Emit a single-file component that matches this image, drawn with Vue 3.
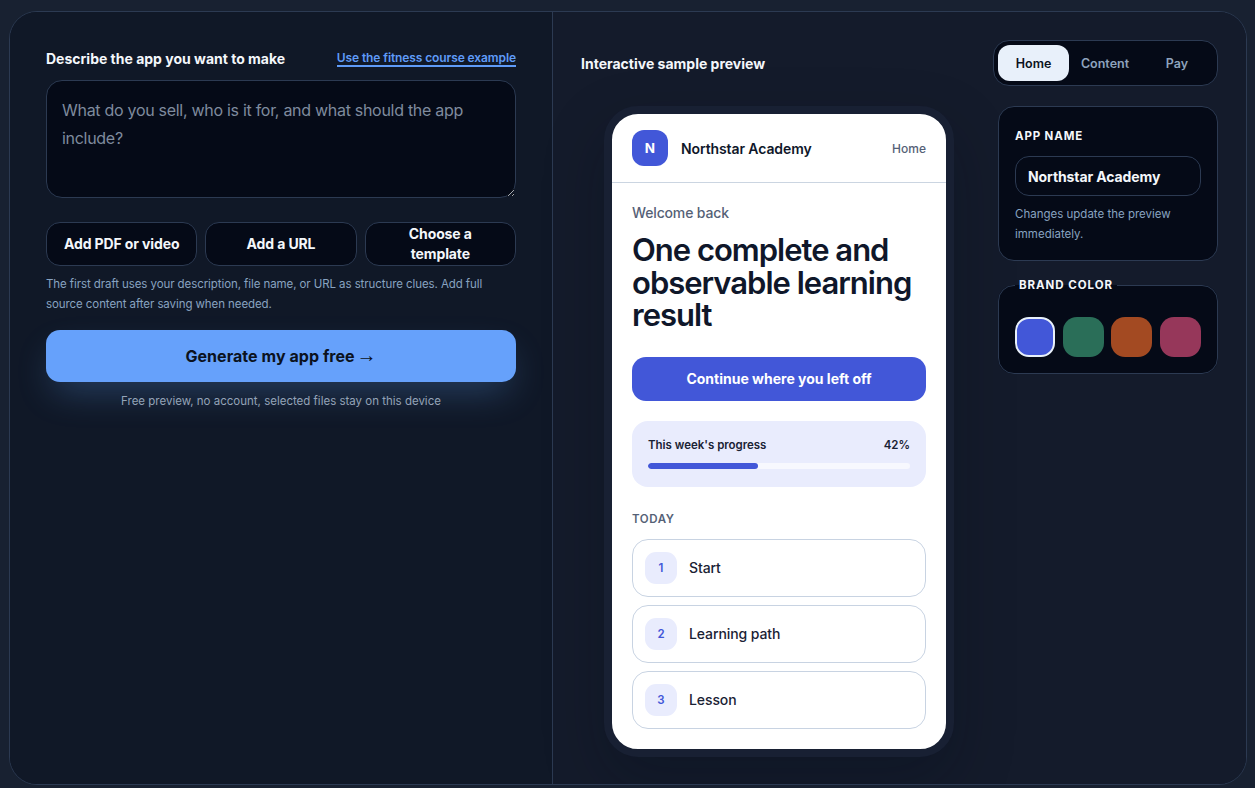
<template>
  <div class="page">
    <main class="shell">
      <section class="left">
        <div class="field-head">
          <label class="field-label" for="desc">Describe the app you want to make</label>
          <a class="example-link" href="#">Use the fitness course example</a>
        </div>
        <textarea
          id="desc"
          v-model="description"
          class="desc-box"
          placeholder="What do you sell, who is it for, and what should the app include?"
        ></textarea>

        <div class="source-row">
          <button v-for="item in sources" :key="item" class="source-btn">{{ item }}</button>
        </div>
        <p class="hint">
          The first draft uses your description, file name, or URL as structure clues. Add full
          source content after saving when needed.
        </p>

        <button class="generate">Generate my app free <span class="arrow">→</span></button>
        <p class="note">Free preview, no account, selected files stay on this device</p>
      </section>

      <section class="right">
        <div class="right-head">
          <h2 class="preview-title">Interactive sample preview</h2>
          <div class="tabs">
            <button
              v-for="tab in tabs"
              :key="tab"
              class="tab"
              :class="{ active: tab === activeTab }"
              @click="activeTab = tab"
            >
              {{ tab }}
            </button>
          </div>
        </div>

        <div class="right-body">
          <div class="phone">
            <div class="screen">
              <header class="app-bar">
                <div class="app-logo" :style="{ background: brand }">{{ appName.charAt(0) }}</div>
                <div class="app-title">{{ appName }}</div>
                <div class="app-nav">Home</div>
              </header>

              <div class="app-content">
                <div class="welcome">Welcome back</div>
                <h1 class="headline">One complete and observable learning result</h1>
                <button class="continue" :style="{ background: brand }">Continue where you left off</button>

                <div class="progress-card">
                  <div class="progress-top">
                    <span>This week's progress</span>
                    <span>{{ progress }}%</span>
                  </div>
                  <div class="progress-track">
                    <div class="progress-fill" :style="{ width: progress + '%', background: brand }"></div>
                  </div>
                </div>

                <div class="today">TODAY</div>
                <div class="lesson-list">
                  <div v-for="(lesson, i) in lessons" :key="lesson" class="lesson">
                    <span class="lesson-num" :style="{ color: brand }">{{ i + 1 }}</span>
                    <span class="lesson-name">{{ lesson }}</span>
                  </div>
                </div>
              </div>
            </div>
          </div>

          <aside class="side">
            <div class="side-card">
              <label class="side-label" for="app-name">APP NAME</label>
              <input id="app-name" v-model="appName" class="name-input" type="text" />
              <p class="side-hint">Changes update the preview immediately.</p>
            </div>

            <fieldset class="color-card">
              <legend class="color-legend">BRAND COLOR</legend>
              <div class="swatches">
                <button
                  v-for="color in colors"
                  :key="color"
                  class="swatch"
                  :class="{ selected: color === brand }"
                  :style="{ background: color }"
                  @click="brand = color"
                ></button>
              </div>
            </fieldset>
          </aside>
        </div>
      </section>
    </main>
  </div>
</template>

<script setup>
import { ref } from "vue";

const description = ref("");
const appName = ref("Northstar Academy");
const activeTab = ref("Home");
const brand = ref("#4257d8");
const progress = ref(42);

const sources = ["Add PDF or video", "Add a URL", "Choose a template"];
const tabs = ["Home", "Content", "Pay"];
const lessons = ["Start", "Learning path", "Lesson"];
const colors = ["#4257d8", "#2a6e58", "#a34a22", "#96375a"];
</script>

<style>
html,
body {
  margin: 0;
  background: #182131;
}
</style>

<style scoped>
.page {
  box-sizing: border-box;
  height: 788px;
  padding: 11px 8px 3px 9px;
  overflow: hidden;
  font-family: Inter, "Noto Sans", sans-serif;
}

.shell {
  box-sizing: border-box;
  height: 774px;
  display: grid;
  grid-template-columns: 543px 1fr;
  border: 1px solid #2c3a52;
  border-radius: 28px;
  overflow: hidden;
  background: #111929;
}

button,
input,
textarea {
  font-family: inherit;
}

.left {
  box-sizing: border-box;
  border-right: 1px solid #2c3a52;
  padding: 34px 36px 0;
  background: #101827;
}

.field-head {
  display: flex;
  justify-content: space-between;
  align-items: center;
  height: 24px;
  margin-bottom: 10px;
}

.field-label {
  color: #f4f7fb;
  font-size: 14px;
  font-weight: 700;
}

.example-link {
  color: #5f9bf8;
  font-size: 12px;
  font-weight: 600;
  letter-spacing: -0.1px;
  text-decoration: none;
  border-bottom: 2px solid #5f9bf8;
  line-height: 15px;
}

.desc-box {
  display: block;
  box-sizing: border-box;
  width: 470px;
  height: 118px;
  padding: 15px;
  border: 1px solid #2c3a52;
  border-radius: 16px;
  background: #050a17;
  color: #e2e8f0;
  font-size: 16px;
  letter-spacing: -0.29px;
  line-height: 28px;
  outline: none;
}

.desc-box::placeholder {
  color: #7f8b9e;
  opacity: 1;
}

.source-row {
  display: grid;
  grid-template-columns: repeat(3, 1fr);
  gap: 8px;
  margin-top: 24px;
}

.source-btn {
  height: 44px;
  padding: 0 14px;
  border: 1px solid #2c3a52;
  border-radius: 14px;
  background: #050a17;
  color: #f4f7fb;
  font-size: 14px;
  font-weight: 700;
  letter-spacing: -0.12px;
  line-height: 20px;
}

.hint {
  margin: 8px 0 0;
  color: #88a3c0;
  font-size: 11.5px;
  letter-spacing: -0.08px;
  line-height: 20px;
}

.generate {
  display: block;
  width: 100%;
  height: 52px;
  margin-top: 16px;
  padding: 0 0 2px;
  border: 0;
  border-radius: 14px;
  background: #66a1fb;
  box-shadow: 0 16px 36px -8px rgba(96, 165, 250, 0.3);
  color: #0b1220;
  font-size: 16px;
  font-weight: 700;
  letter-spacing: 0.05px;
}

.arrow {
  margin-left: -2px;
  font-family: "Liberation Sans", sans-serif;
  font-size: 20px;
  font-weight: 400;
  line-height: 1;
}

.note {
  margin: 11px 0 0;
  color: #94a3b8;
  font-size: 11.5px;
  line-height: 16px;
  text-align: center;
}

.right {
  box-sizing: border-box;
  padding: 28px 28px 0;
  background: #141b2b;
}

.right-head {
  display: flex;
  justify-content: space-between;
  align-items: center;
  height: 46px;
}

.preview-title {
  margin: 0;
  color: #f4f7fb;
  font-size: 14px;
  font-weight: 700;
}

.tabs {
  box-sizing: border-box;
  display: grid;
  grid-template-columns: 71px 1fr 1fr;
  width: 225px;
  height: 46px;
  padding: 4px;
  border: 1px solid #2c3a52;
  border-radius: 16px;
  background: #050a17;
}

.tab {
  border: 0;
  border-radius: 12px;
  background: transparent;
  color: #8ea3bd;
  font-size: 12.5px;
  font-weight: 600;
}

.tab.active {
  background: #e8f0fa;
  color: #0b1220;
}

.right-body {
  display: flex;
  justify-content: space-between;
  align-items: flex-start;
  margin-top: 20px;
}

.phone {
  box-sizing: border-box;
  width: 350px;
  height: 651px;
  margin-left: 23px;
  border: 8px solid #182033;
  border-radius: 34px;
  overflow: hidden;
  background: #fff;
  box-shadow: 0 24px 60px rgba(5, 10, 23, 0.25);
}

.app-bar {
  box-sizing: border-box;
  display: flex;
  align-items: center;
  height: 69px;
  padding: 0 20px;
  border-bottom: 1px solid #cbd5e1;
}

.app-logo {
  width: 36px;
  height: 36px;
  margin-right: 13px;
  border-radius: 12px;
  color: #fff;
  font-size: 13.5px;
  font-weight: 700;
  line-height: 36px;
  text-align: center;
}

.app-title {
  flex: 1;
  color: #0f172a;
  font-size: 14px;
  font-weight: 600;
  letter-spacing: -0.1px;
}

.app-nav {
  color: #556176;
  font-size: 12px;
  font-weight: 500;
}

.app-content {
  padding: 21px 20px 0;
}

.welcome {
  color: #556176;
  font-size: 14px;
  font-weight: 500;
  letter-spacing: -0.15px;
  line-height: 18px;
}

.headline {
  margin: 12px 0 0;
  color: #0f172a;
  font-size: 31px;
  font-weight: 600;
  letter-spacing: -1px;
  line-height: 32.5px;
}

.continue {
  display: block;
  width: 100%;
  height: 44px;
  margin-top: 25px;
  border: 0;
  border-radius: 14px;
  color: #fff;
  font-size: 14px;
  font-weight: 700;
}

.progress-card {
  box-sizing: border-box;
  height: 66px;
  margin-top: 20px;
  padding: 16px;
  border-radius: 16px;
  background: #e9ecfd;
}

.progress-top {
  display: flex;
  justify-content: space-between;
  color: #1a2234;
  font-size: 11.5px;
  font-weight: 600;
  letter-spacing: -0.02px;
  line-height: 16px;
}

.progress-track {
  height: 6px;
  margin-top: 10px;
  border-radius: 3px;
  background: #f7f8fe;
  overflow: hidden;
}

.progress-fill {
  height: 100%;
  border-radius: 3px;
}

.today {
  margin-top: 24px;
  color: #556176;
  font-size: 11.5px;
  font-weight: 600;
  letter-spacing: 0.6px;
  line-height: 16px;
}

.lesson-list {
  display: flex;
  flex-direction: column;
  gap: 8px;
  margin-top: 12px;
}

.lesson {
  box-sizing: border-box;
  display: flex;
  align-items: center;
  height: 58px;
  padding: 0 12px;
  border: 1px solid #c8d3e2;
  border-radius: 16px;
}

.lesson-num {
  width: 32px;
  height: 32px;
  margin-right: 12px;
  border-radius: 11px;
  background: #e9ecfd;
  font-size: 11.5px;
  font-weight: 600;
  line-height: 32px;
  text-align: center;
}

.lesson-name {
  color: #1a2234;
  font-size: 14px;
  font-weight: 500;
  letter-spacing: -0.1px;
}

.side {
  width: 220px;
}

.side-card {
  box-sizing: border-box;
  height: 155px;
  padding: 22px 16px 0;
  border: 1px solid #2c3a52;
  border-radius: 16px;
  background: #050a17;
}

.side-label {
  display: block;
  color: #f4f7fb;
  font-size: 11.5px;
  font-weight: 700;
  letter-spacing: 0.85px;
  line-height: 14px;
}

.name-input {
  display: block;
  box-sizing: border-box;
  width: 186px;
  height: 40px;
  margin-top: 13px;
  padding: 0 12px;
  border: 1px solid #2c3a52;
  border-radius: 14px;
  background: #050a17;
  color: #f4f7fb;
  font-size: 14px;
  font-weight: 700;
  letter-spacing: -0.1px;
  outline: none;
}

.side-hint {
  margin: 8px 0 0;
  color: #88a3c0;
  font-size: 11.5px;
  line-height: 20px;
}

.color-card {
  box-sizing: border-box;
  height: 96px;
  margin: 17px 0 0;
  padding: 25px 16px 0;
  border: 1px solid #2c3a52;
  border-radius: 16px;
  background: #050a17;
}

.color-legend {
  padding: 0 4px;
  color: #f4f7fb;
  font-size: 11.5px;
  font-weight: 700;
  letter-spacing: 0.95px;
  line-height: 14px;
}

.swatches {
  display: flex;
  justify-content: space-between;
}

.swatch {
  width: 41px;
  height: 40px;
  padding: 0;
  border: 0;
  border-radius: 14px;
}

.swatch.selected {
  box-sizing: border-box;
  width: 40px;
  border: 2px solid #e8f0fa;
}
</style>
